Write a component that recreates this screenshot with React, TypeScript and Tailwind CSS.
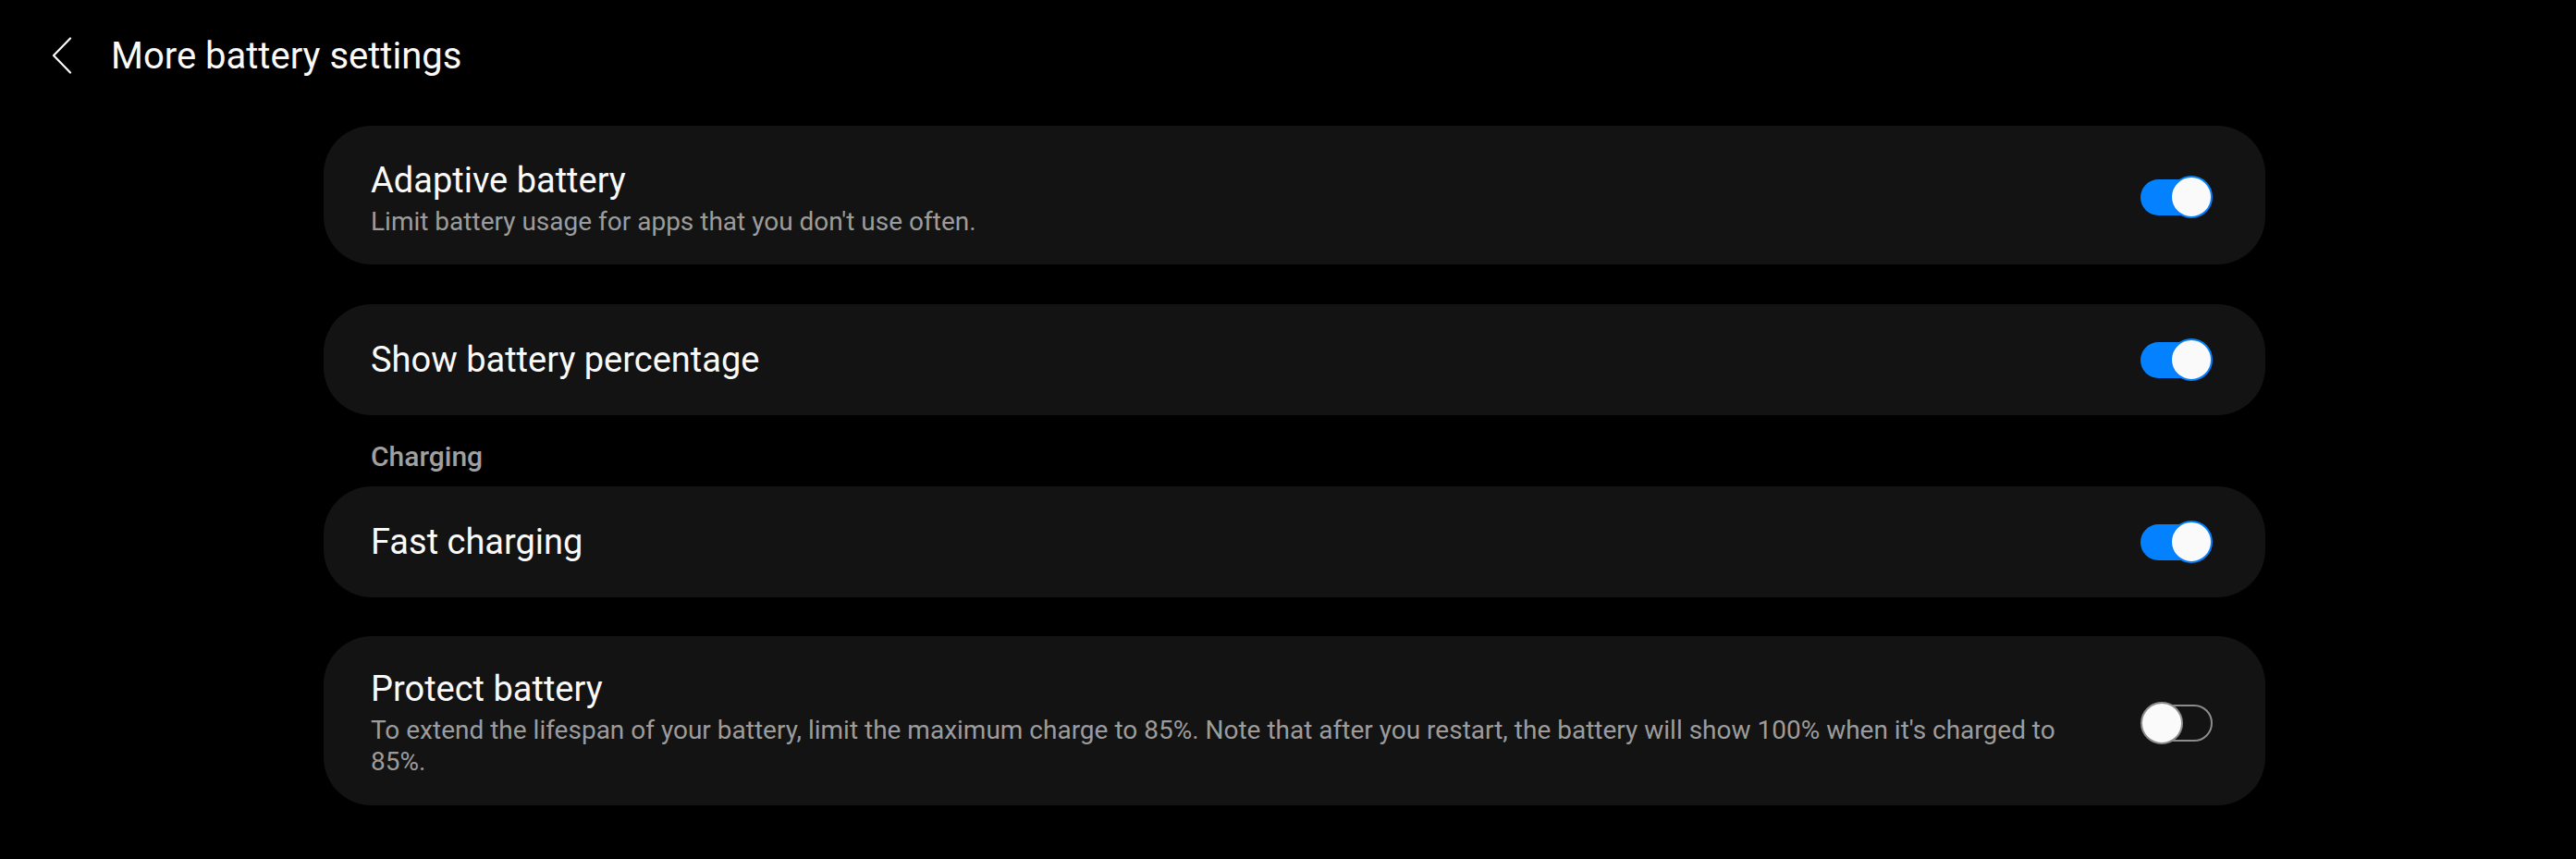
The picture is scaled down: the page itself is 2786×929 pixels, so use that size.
import { ReactNode } from 'react'

function Toggle({ on }: { on: boolean }) {
  if (on) {
    return (
      <div className="relative h-[46px] w-[78px] shrink-0">
        <div className="absolute left-0 top-[4px] h-[39px] w-[77px] rounded-full bg-[#0381fe]" />
        <div className="absolute right-0 top-0 h-[46px] w-[46px] rounded-full border-2 border-[#0381fe] bg-[#fafafa]" />
      </div>
    )
  }
  return (
    <div className="relative h-[46px] w-[78px] shrink-0">
      <div className="absolute right-0 top-[3px] h-[40px] w-[76px] rounded-full border-2 border-[#8c8c8c]" />
      <div className="absolute left-0 top-0 h-[46px] w-[46px] rounded-full border-2 border-[#8c8c8c] bg-[#fafafa]" />
    </div>
  )
}

function Card({
  title,
  desc,
  on,
  pad,
  textShift = '',
}: {
  title: string
  desc?: ReactNode
  on: boolean
  pad: string
  textShift?: string
}) {
  return (
    <div className={`flex items-center rounded-[52px] bg-[#131313] pl-[51px] pr-[57px] ${pad}`}>
      <div className={`mr-[70px] flex-1 ${textShift}`}>
        <div className="text-[38px] leading-[44px] text-[#fafafa]">{title}</div>
        {desc && <div className="mt-[6px] text-[28px] leading-[34px] text-[#9c9c9c]">{desc}</div>}
      </div>
      <Toggle on={on} />
    </div>
  )
}

export default function App() {
  return (
    <div className="min-h-screen bg-black font-['Roboto',sans-serif]">
      <header className="flex items-center pl-[56px] pt-[37px]">
        <svg width="22" height="40" viewBox="0 0 22 40" fill="none" className="-mt-[2px]">
          <path d="M20 1.5 L2 20 L20 38.5" stroke="#fafafa" strokeWidth="2.2" strokeLinecap="round" strokeLinejoin="round" />
        </svg>
        <h1 className="ml-[42px] text-[40px] leading-[48px] text-[#fafafa]">More battery settings</h1>
      </header>

      <main className="ml-[350px] mt-[51px] flex w-[2100px] flex-col">
        <Card
          title="Adaptive battery"
          desc="Limit battery usage for apps that you don't use often."
          on
          pad="pt-[35px] pb-[31px]"
          textShift="mt-[2px] -mb-[2px]"
        />
        <div className="mt-[43px]">
          <Card title="Show battery percentage" on pad="py-[37px]" />
        </div>
        <div className="pl-[51px] pt-[27px] pb-[14px] text-[30px] font-medium leading-[36px] text-[#a0a0a0]">Charging</div>
        <Card title="Fast charging" on pad="py-[37px]" />
        <div className="mt-[42px]">
          <Card
            title="Protect battery"
            desc="To extend the lifespan of your battery, limit the maximum charge to 85%. Note that after you restart, the battery will show 100% when it's charged to 85%."
            on={false}
            pad="pt-[35px] pb-[30px]"
          />
        </div>
      </main>
    </div>
  )
}
